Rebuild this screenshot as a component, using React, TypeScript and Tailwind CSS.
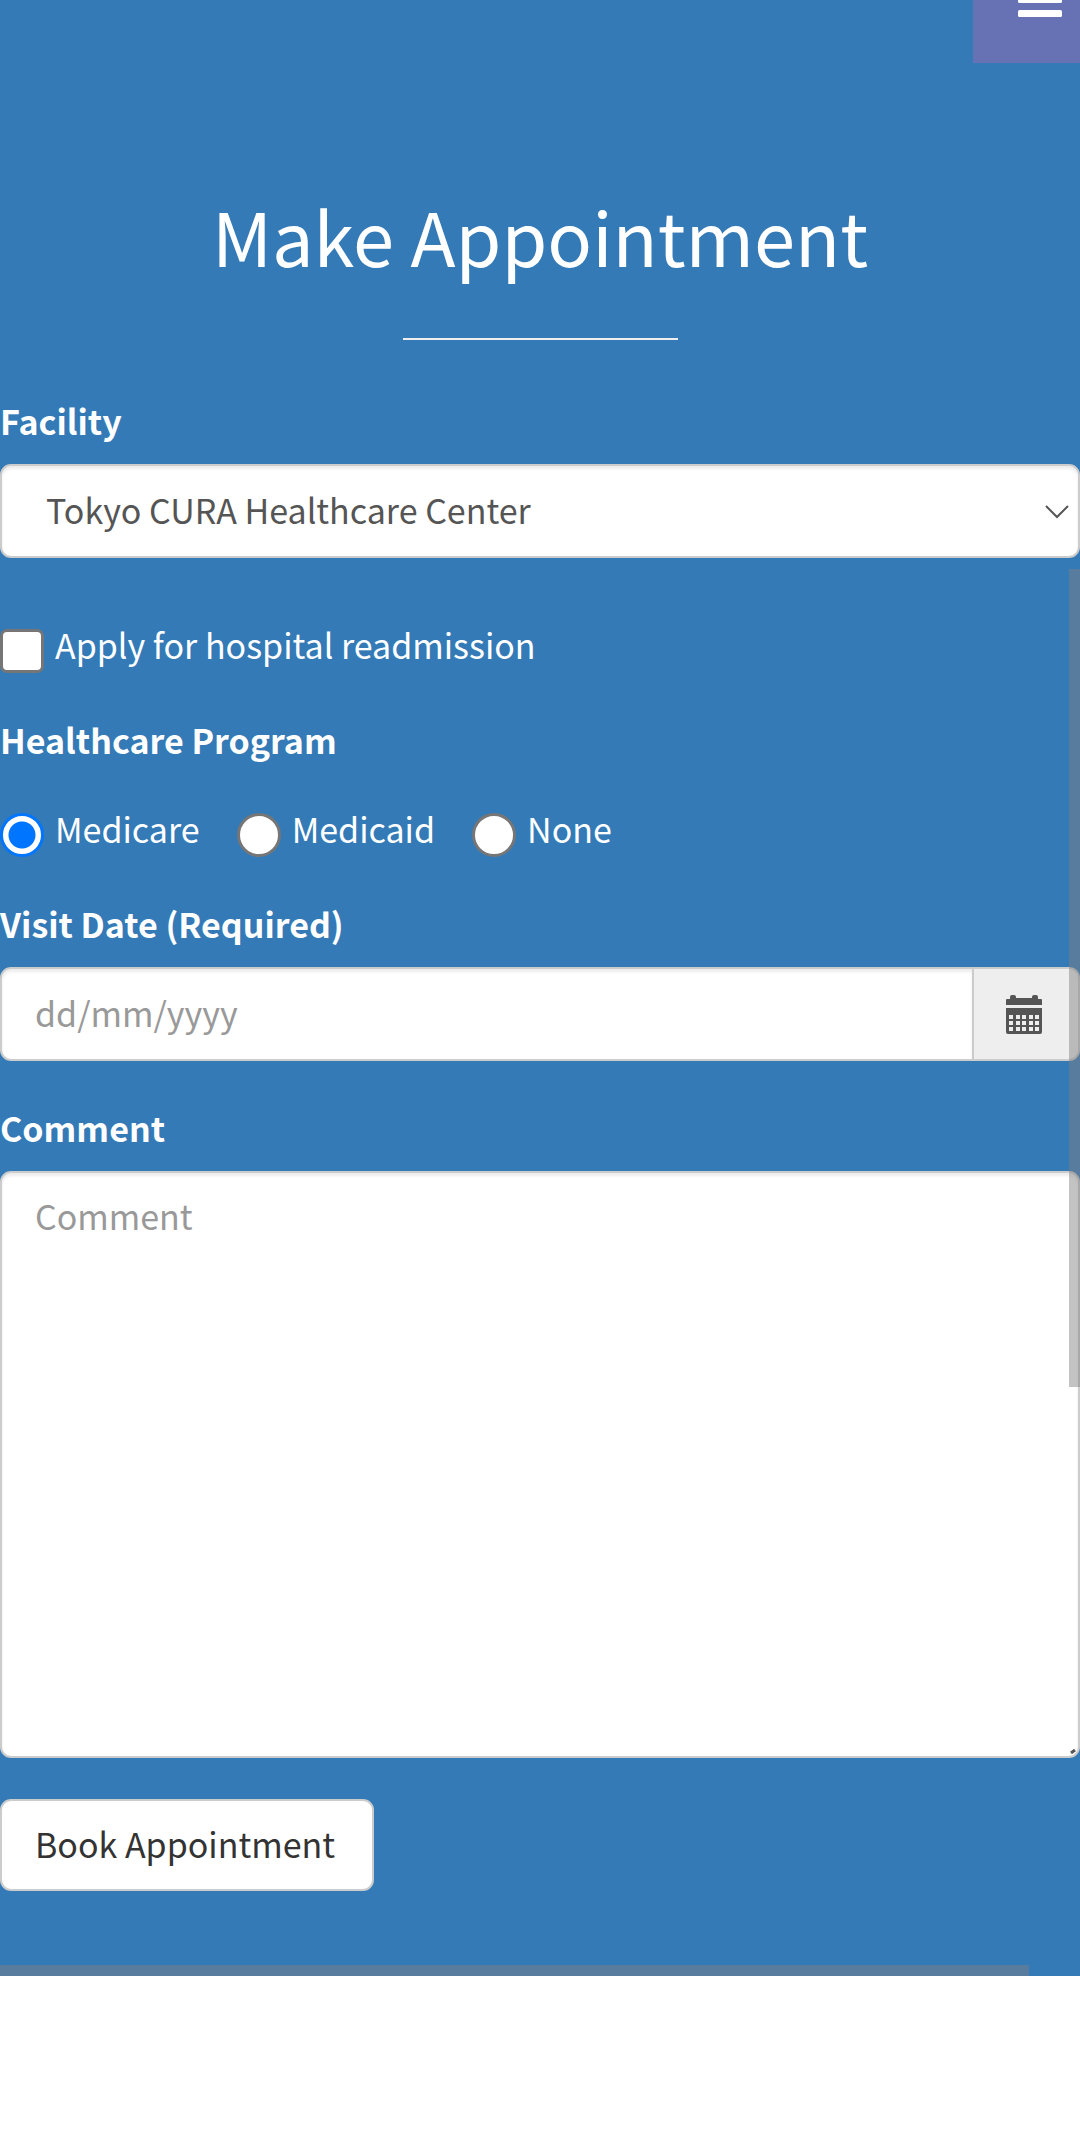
import React from "react";

const labelClass = "block font-bold leading-[52px] mb-[17px]";
const fieldClass =
  "w-full border-2 border-[#cccccc] bg-white text-[#555555] shadow-[inset_0_3px_3px_rgba(0,0,0,0.075)] placeholder:text-[#999999] placeholder:opacity-100 outline-none";

function Chevron() {
  return (
    <svg className="pointer-events-none absolute right-[11px] top-[41px]" width="24" height="14" viewBox="0 0 24 14" fill="none" stroke="#555555" strokeWidth="2" aria-hidden="true">
      <path d="M1 1 L12 12 L23 1" />
    </svg>
  );
}

function CalendarIcon() {
  const columns = [3, 10, 16, 23, 29];
  const rows = [20, 26, 32];
  return (
    <svg width="36" height="39" viewBox="0 0 36 39" fill="#555555" aria-hidden="true">
      <path d="M0 10V5q0-1 1-1h3V2q0-2 2-2h2q2 0 2 2v1h16V2q0-2 2-2h2q2 0 2 2v2h3q1 0 1 1v5z" />
      <path d="M0 13h36v24q0 2-2 2H2q-2 0-2-2z" />
      {rows.map((y) => columns.map((x) => <rect key={`${x}-${y}`} x={x} y={y} width="4" height="4" fill="#eeeeee" />))}
    </svg>
  );
}

function ProgramOption({ value, checked }: { value: string; checked?: boolean }) {
  return (
    <label className="flex items-end gap-[11px]">
      <input
        type="radio"
        name="program"
        value={value}
        defaultChecked={checked}
        className="size-11 appearance-none rounded-full border-[3px] border-[#767676] bg-white checked:border-[#0075ff] checked:bg-[radial-gradient(circle,#0075ff_13px,#ffffff_14px)]"
      />
      <span className="mb-0.5 leading-[52px]">{value}</span>
    </label>
  );
}

export default function App() {
  return (
    <div className="min-h-screen bg-white font-['Noto_Sans_CJK_SC','Noto_Sans',sans-serif] text-[34px] text-white">
      <main className="relative overflow-hidden bg-[#337ab7] pb-[85px]">
        <button type="button" aria-label="Menu" className="absolute right-0 top-0 h-[63px] w-[107px] bg-[#6772b5]">
          <svg className="absolute left-[45px] top-0" width="44" height="18" viewBox="0 0 44 18" fill="#ffffff" aria-hidden="true">
            <rect y="-4" width="44" height="7" rx="1.5" />
            <rect y="10" width="44" height="7" rx="1.5" />
          </svg>
        </button>

        <h1 className="pt-[190px] text-center text-[74px] leading-[90px]">Make Appointment</h1>
        <hr className="mx-auto mt-[58px] w-[275px] border-t-2 border-[#eeeeee]" />

        <form className="pt-[55px]" onSubmit={(event) => event.preventDefault()}>
          <label htmlFor="facility" className={labelClass}>Facility</label>
          <div className="relative">
            <select id="facility" className={`${fieldClass} h-[94px] appearance-none rounded-[11px] pb-1 pl-11`}>
              <option>Tokyo CURA Healthcare Center</option>
              <option>Hongkong CURA Healthcare Center</option>
              <option>Seoul CURA Healthcare Center</option>
            </select>
            <Chevron />
          </div>

          <label className="mt-[61px] flex items-end gap-[11px]">
            <input
              type="checkbox"
              className="size-11 appearance-none rounded-[7px] border-[3px] border-[#767676] bg-white checked:bg-[#0075ff]"
            />
            <span className="mb-0.5 leading-[52px]">Apply for hospital readmission</span>
          </label>

          <fieldset className="mt-[41px]">
            <legend className={labelClass}>Healthcare Program</legend>
            <div className="flex gap-[37px] pt-5">
              <ProgramOption value="Medicare" checked />
              <ProgramOption value="Medicaid" />
              <ProgramOption value="None" />
            </div>
          </fieldset>

          <label htmlFor="visit-date" className={`${labelClass} mt-[41px]`}>Visit Date (Required)</label>
          <div className="flex h-[94px]">
            <input id="visit-date" type="text" placeholder="dd/mm/yyyy" className={`${fieldClass} min-w-0 flex-1 rounded-l-[11px] px-[33px] pb-1`} />
            <button type="button" aria-label="Choose a date" className="flex w-[106px] items-center justify-center rounded-r-[11px] border-2 border-l-0 border-[#cccccc] bg-[#eeeeee] pr-1">
              <CalendarIcon />
            </button>
          </div>

          <label htmlFor="comment" className={`${labelClass} mt-[41px]`}>Comment</label>
          <div className="relative">
            <textarea id="comment" rows={10} placeholder="Comment" className={`${fieldClass} block h-[587px] resize-none rounded-[11px] px-[33px] py-[15px] leading-[55px]`} />
            <svg className="pointer-events-none absolute bottom-1 right-1" width="6" height="5" viewBox="0 0 6 5" stroke="#555555" strokeWidth="3" aria-hidden="true">
              <path d="M1 4 L5 1" />
            </svg>
          </div>

          <button type="submit" className="mt-[41px] h-[92px] rounded-[11px] border-2 border-[#cccccc] bg-white pb-1 pl-[33px] pr-[37px] text-[#333333]">
            Book Appointment
          </button>
        </form>

        <div className="pointer-events-none absolute right-0 top-[569px] h-[818px] w-[11px] bg-[#808080]/47" />
        <div className="pointer-events-none absolute bottom-0 left-0 right-[51px] h-[11px] bg-[#808080]/47" />
      </main>
    </div>
  );
}
